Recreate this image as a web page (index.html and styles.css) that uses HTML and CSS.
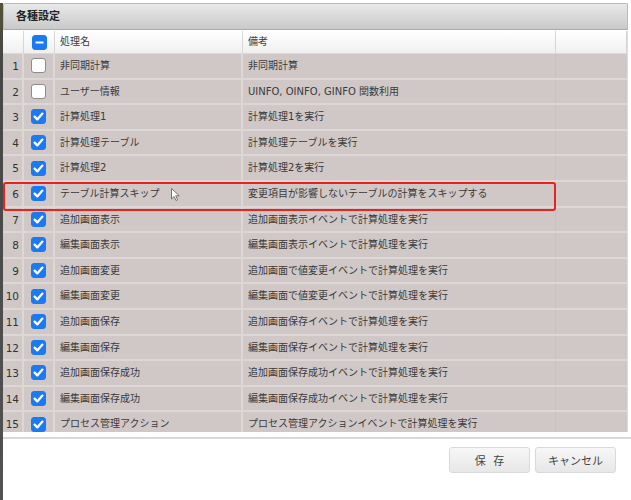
FILE: index.html
```html
<!DOCTYPE html>
<html lang="ja">
<head>
    <meta charset="UTF-8">
    <title>各種設定</title>
    <link rel="stylesheet" href="styles.css">
</head>
<body>

<div class="backdrop"></div>

<div class="dialog">
    <div class="dialog-title">各種設定</div>

    <div class="grid">
        <div class="grid-head">
            <div class="cell"></div>
            <div class="cell cell-check"><span class="check check-mixed"><svg viewBox="0 0 15 15"><path d="M3.5 7.5h8"/></svg></span></div>
            <div class="cell">処理名</div>
            <div class="cell">備考</div>
            <div class="cell"></div>
        </div>

        <div class="grid-body">
            <div class="row"><div class="cell num">1</div><div class="cell cell-check"><span class="check"></span></div><div class="cell">非同期計算</div><div class="cell">非同期計算</div></div>
            <div class="row"><div class="cell num">2</div><div class="cell cell-check"><span class="check"></span></div><div class="cell">ユーザー情報</div><div class="cell">UINFO, OINFO, GINFO 関数利用</div></div>
            <div class="row"><div class="cell num">3</div><div class="cell cell-check"><span class="check on"><svg viewBox="0 0 15 15"><path d="M3.6 7.6l2.7 2.8 5.1-5.8"/></svg></span></div><div class="cell">計算処理1</div><div class="cell">計算処理1を実行</div></div>
            <div class="row"><div class="cell num">4</div><div class="cell cell-check"><span class="check on"><svg viewBox="0 0 15 15"><path d="M3.6 7.6l2.7 2.8 5.1-5.8"/></svg></span></div><div class="cell">計算処理テーブル</div><div class="cell">計算処理テーブルを実行</div></div>
            <div class="row"><div class="cell num">5</div><div class="cell cell-check"><span class="check on"><svg viewBox="0 0 15 15"><path d="M3.6 7.6l2.7 2.8 5.1-5.8"/></svg></span></div><div class="cell">計算処理2</div><div class="cell">計算処理2を実行</div></div>
            <div class="row"><div class="cell num">6</div><div class="cell cell-check"><span class="check on"><svg viewBox="0 0 15 15"><path d="M3.6 7.6l2.7 2.8 5.1-5.8"/></svg></span></div><div class="cell">テーブル計算スキップ</div><div class="cell">変更項目が影響しないテーブルの計算をスキップする</div></div>
            <div class="row"><div class="cell num">7</div><div class="cell cell-check"><span class="check on"><svg viewBox="0 0 15 15"><path d="M3.6 7.6l2.7 2.8 5.1-5.8"/></svg></span></div><div class="cell">追加画面表示</div><div class="cell">追加画面表示イベントで計算処理を実行</div></div>
            <div class="row"><div class="cell num">8</div><div class="cell cell-check"><span class="check on"><svg viewBox="0 0 15 15"><path d="M3.6 7.6l2.7 2.8 5.1-5.8"/></svg></span></div><div class="cell">編集画面表示</div><div class="cell">編集画面表示イベントで計算処理を実行</div></div>
            <div class="row"><div class="cell num">9</div><div class="cell cell-check"><span class="check on"><svg viewBox="0 0 15 15"><path d="M3.6 7.6l2.7 2.8 5.1-5.8"/></svg></span></div><div class="cell">追加画面変更</div><div class="cell">追加画面で値変更イベントで計算処理を実行</div></div>
            <div class="row"><div class="cell num">10</div><div class="cell cell-check"><span class="check on"><svg viewBox="0 0 15 15"><path d="M3.6 7.6l2.7 2.8 5.1-5.8"/></svg></span></div><div class="cell">編集画面変更</div><div class="cell">編集画面で値変更イベントで計算処理を実行</div></div>
            <div class="row"><div class="cell num">11</div><div class="cell cell-check"><span class="check on"><svg viewBox="0 0 15 15"><path d="M3.6 7.6l2.7 2.8 5.1-5.8"/></svg></span></div><div class="cell">追加画面保存</div><div class="cell">追加画面保存イベントで計算処理を実行</div></div>
            <div class="row"><div class="cell num">12</div><div class="cell cell-check"><span class="check on"><svg viewBox="0 0 15 15"><path d="M3.6 7.6l2.7 2.8 5.1-5.8"/></svg></span></div><div class="cell">編集画面保存</div><div class="cell">編集画面保存イベントで計算処理を実行</div></div>
            <div class="row"><div class="cell num">13</div><div class="cell cell-check"><span class="check on"><svg viewBox="0 0 15 15"><path d="M3.6 7.6l2.7 2.8 5.1-5.8"/></svg></span></div><div class="cell">追加画面保存成功</div><div class="cell">追加画面保存成功イベントで計算処理を実行</div></div>
            <div class="row"><div class="cell num">14</div><div class="cell cell-check"><span class="check on"><svg viewBox="0 0 15 15"><path d="M3.6 7.6l2.7 2.8 5.1-5.8"/></svg></span></div><div class="cell">編集画面保存成功</div><div class="cell">編集画面保存成功イベントで計算処理を実行</div></div>
            <div class="row"><div class="cell num">15</div><div class="cell cell-check"><span class="check on"><svg viewBox="0 0 15 15"><path d="M3.6 7.6l2.7 2.8 5.1-5.8"/></svg></span></div><div class="cell">プロセス管理アクション</div><div class="cell">プロセス管理アクションイベントで計算処理を実行</div></div>

            <!-- highlight around row 6 -->
            <div class="mark"></div>
            <svg class="cursor" viewBox="0 0 9 13"><path d="M0.5 0.5v10.5l2.6-2.5 1.9 4 1.6-0.8-1.9-3.9h3.6z"/></svg>
        </div>
    </div>

    <div class="dialog-foot">
        <button class="btn btn-save">保 存</button>
        <button class="btn">キャンセル</button>
    </div>
</div>

</body>
</html>
```

FILE: styles.css
```css
body {
    margin: 0;
    padding: 0;
    display: flex;
    height: 500px;
    overflow: hidden;
    background: #fff;
    font-family: "DejaVu Sans", "Noto Sans CJK JP", sans-serif;
    color: #333;
}

.backdrop {
    width: 3px;
    margin-top: 3px;
    background: linear-gradient(#55513a, #464646 60px, #525252);
}

.dialog {
    width: 628px;
    padding-top: 3px;
}

.dialog-title {
    width: 625px;
    height: 27px;
    box-sizing: border-box;
    border: 1px solid #b9b9b9;
    border-bottom-color: #aaa;
    border-radius: 2px 2px 0 0;
    background: linear-gradient(#e9e9e9, #c9c9c9);
    padding-left: 12px;
    font-size: 11px;
    font-weight: bold;
    line-height: 26px;
    color: #222;
}

.grid {
    width: 625px;
    border-right: 1px solid #dcdcdc;
    box-sizing: border-box;
}

.grid-head {
    display: grid;
    grid-template-columns: 21px 31px 188px 313px 71px;
    height: 23px;
    background: linear-gradient(#ffffff, #f0f0f0);
    border-bottom: 1px solid #dadada;
    box-sizing: border-box;
    margin-top: 1px;
}

.grid-head .cell {
    border-right: 1px solid #d6d6d6;
    line-height: 22px;
}

.grid-head .cell-check {
    padding-left: 0;
}

.grid-body {
    position: relative;
    height: 378px;
    overflow: hidden;
}

.row {
    display: grid;
    grid-template-columns: 21px 31px 188px 313px;
    height: 25.6px;
    box-sizing: border-box;
    background: #d0c8c6;
    border-bottom: 2px solid #ddd7d5;
}

.cell {
    box-sizing: border-box;
    border-right: 2px solid #ddd7d5;
    padding-left: 5px;
    font-size: 10px;
    line-height: 23.6px;
    color: #3a3a3a;
    white-space: nowrap;
    overflow: hidden;
}

.row .cell:last-child {
    border-right: 1px solid #c9c1bf;
}

.num {
    text-align: right;
    padding: 1px 3px 0 0;
    font-size: 10.5px;
    color: #333;
}

.cell-check {
    display: flex;
    justify-content: center;
    align-items: center;
    padding-left: 0;
}

.check {
    width: 15px;
    height: 15px;
    box-sizing: border-box;
    border: 1px solid #8c8c8c;
    border-radius: 3px;
    background: #fff;
    display: block;
}

.check svg {
    display: block;
    width: 15px;
    height: 15px;
    margin: -1px;
    fill: none;
    stroke: #fff;
    stroke-width: 2.3;
    stroke-linecap: round;
    stroke-linejoin: round;
}

.check.on,
.check-mixed {
    background: #1b7af2;
    border-color: #1b7af2;
}

.check-mixed svg {
    stroke-width: 2;
    stroke-linecap: butt;
}

.mark {
    position: absolute;
    left: 0;
    top: 128px;
    width: 553px;
    height: 29px;
    box-sizing: border-box;
    border: 2px solid #e8231f;
    border-radius: 3px;
}

.cursor {
    position: absolute;
    left: 168px;
    top: 134px;
    width: 9px;
    height: 13px;
    fill: #fff;
    stroke: #666;
    stroke-width: 0.9;
}

.dialog-foot {
    width: 628px;
    margin-top: 5px;
    border-top: 2px solid #d8d8d8;
    display: flex;
    justify-content: flex-end;
    gap: 5px;
    padding: 8px 15px 0 0;
    box-sizing: border-box;
}

.btn {
    width: 81px;
    height: 26px;
    border: 1px solid #d9d9d9;
    border-radius: 3px;
    background: linear-gradient(#f7f7f7, #e7e7e7);
    font-family: "DejaVu Sans", "Noto Sans CJK JP", sans-serif;
    font-size: 11px;
    color: #444;
    padding: 0;
    cursor: pointer;
}

.btn-save {
    word-spacing: 4px;
}
```
